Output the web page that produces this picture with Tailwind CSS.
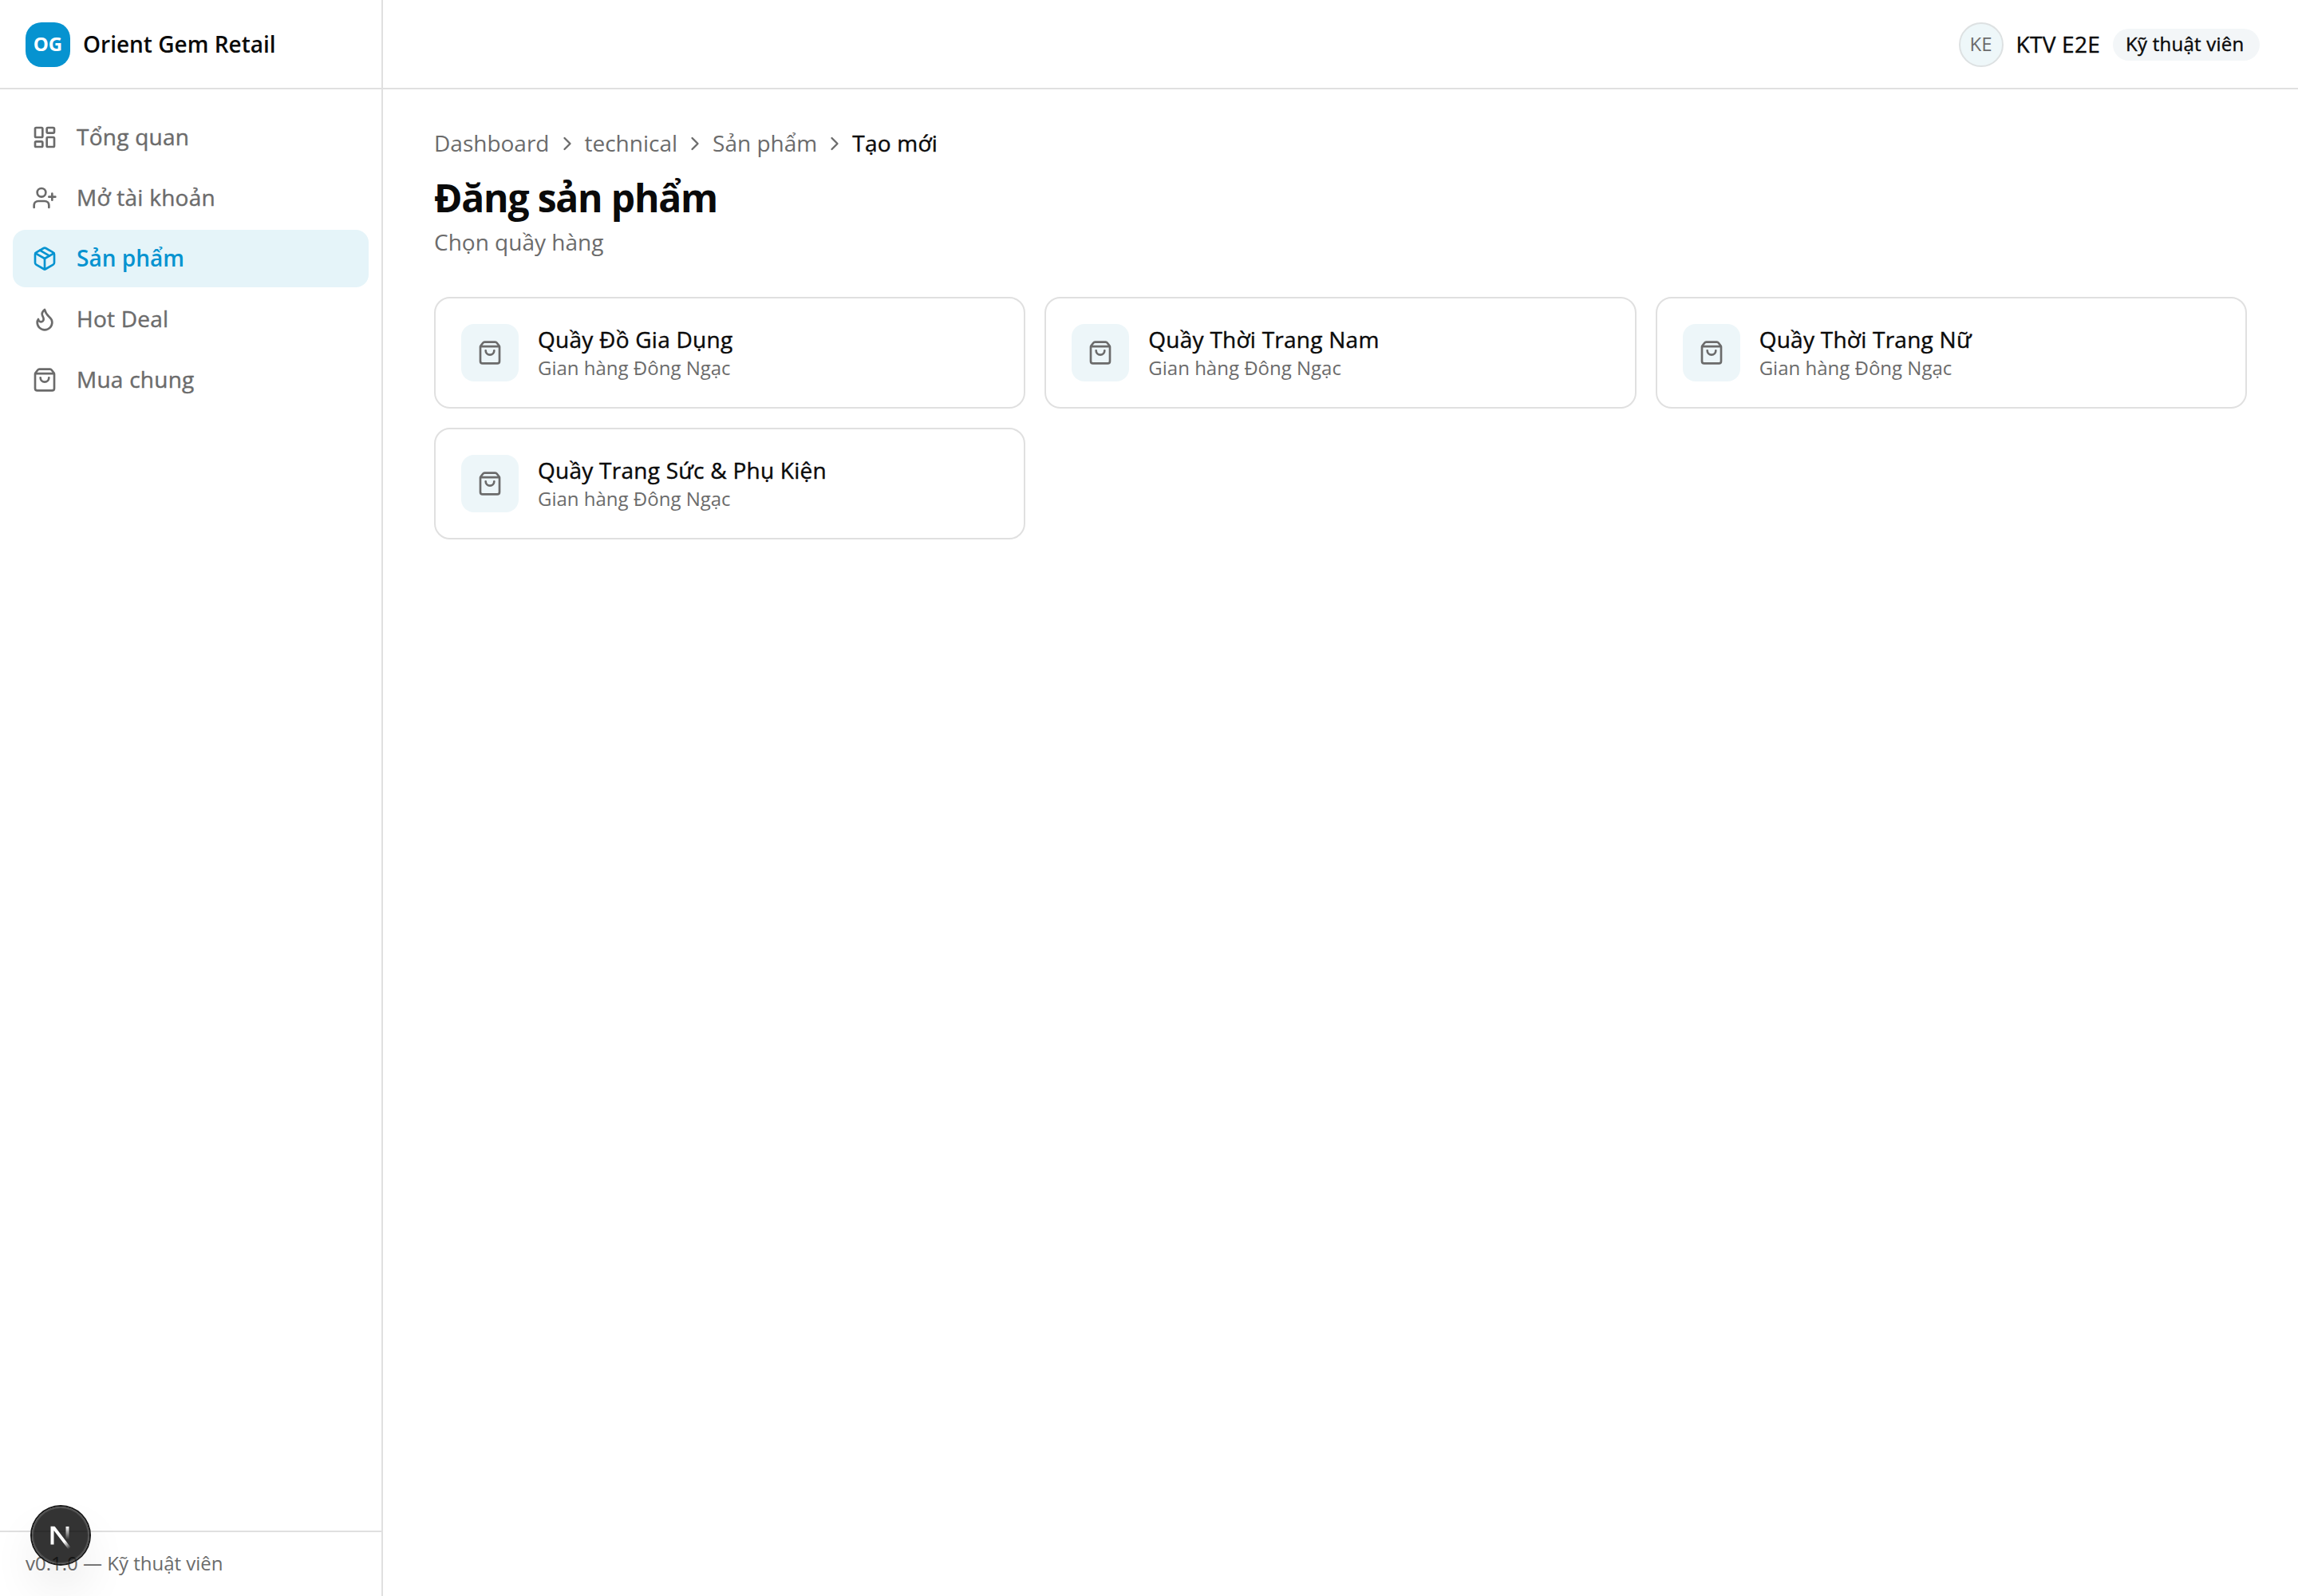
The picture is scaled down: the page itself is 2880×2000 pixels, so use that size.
<!DOCTYPE html>
<html lang="vi">
<head>
    <meta charset="UTF-8">
    <meta name="viewport" content="width=device-width, initial-scale=1.0">
    <title>Đăng sản phẩm | Orient Gem Retail</title>
    <script src="https://cdn.jsdelivr.net/npm/@tailwindcss/browser@4"></script>
    <style>
        body { font-family: 'Open Sans', 'Noto Sans', sans-serif; }
        /* Open Sans has no medium cut here, thicken the regular one */
        .medium { -webkit-text-stroke: 0.4px currentColor; letter-spacing: 0.25px; }
    </style>
</head>
<body class="bg-white text-[#0a0a0a] text-[28px] leading-[40px]">

    <!-- Icons -->
    <svg class="hidden">
        <symbol id="i-dashboard" viewBox="0 0 24 24"><rect width="7" height="9" x="3" y="3" rx="1"/><rect width="7" height="5" x="14" y="3" rx="1"/><rect width="7" height="9" x="14" y="12" rx="1"/><rect width="7" height="5" x="3" y="16" rx="1"/></symbol>
        <symbol id="i-user-plus" viewBox="0 0 24 24"><path d="M16 21v-2a4 4 0 0 0-4-4H6a4 4 0 0 0-4 4v2"/><circle cx="9" cy="7" r="4"/><path d="M19 8v6M22 11h-6"/></symbol>
        <symbol id="i-package" viewBox="0 0 24 24"><path d="M11 21.73a2 2 0 0 0 2 0l7-4A2 2 0 0 0 21 16V8a2 2 0 0 0-1-1.73l-7-4a2 2 0 0 0-2 0l-7 4A2 2 0 0 0 3 8v8a2 2 0 0 0 1 1.73z"/><path d="M12 22V12"/><path d="M3.29 7 12 12l8.71-5"/><path d="m7.5 4.27 9 5.15"/></symbol>
        <symbol id="i-flame" viewBox="0 0 24 24"><path d="M12 3q1 4 4 6.5t3 5.5a1 1 0 0 1-14 0 5 5 0 0 1 1-3 1 1 0 0 0 5 0c0-2-1.5-3-1.5-5q0-2 2.5-4"/></symbol>
        <symbol id="i-bag" viewBox="0 0 24 24"><path d="M16 10a4 4 0 0 1-8 0"/><path d="M3.103 6.034h17.794"/><path d="M3.4 5.467a2 2 0 0 0-.4 1.2V20a2 2 0 0 0 2 2h14a2 2 0 0 0 2-2V6.667a2 2 0 0 0-.4-1.2l-2-2.667A2 2 0 0 0 17 2H7a2 2 0 0 0-1.6.8z"/></symbol>
        <symbol id="i-chevron" viewBox="0 0 24 24"><path d="m9 18 6-6-6-6"/></symbol>
    </svg>

    <div class="flex h-screen">

        <!-- Sidebar -->
        <aside class="flex w-[480px] shrink-0 flex-col border-r-2 border-[#e0e0e0]">
            <div class="flex h-28 items-center gap-4 border-b-2 border-[#e0e0e0] px-8 pt-0.5">
                <div class="flex size-14 items-center justify-center rounded-[20px] bg-[#0693d0] pb-0.5 text-2xl font-bold text-white">OG</div>
                <span class="pb-0.5 font-semibold">Orient Gem Retail</span>
            </div>
            <nav id="nav" class="flex flex-1 flex-col gap-1 px-4 py-6"></nav>
            <div class="border-t-2 border-[#e0e0e0] px-8 pt-[23px] pb-[25px] text-2xl leading-8 text-[#6b6b6b]">v0.1.0 — Kỹ thuật viên</div>
        </aside>

        <div class="flex flex-1 flex-col">
            <!-- Top bar -->
            <header class="flex h-28 items-center justify-end gap-4 border-b-2 border-[#e0e0e0] px-12 pt-0.5">
                <div class="flex size-14 items-center justify-center rounded-full border-2 border-[#dde1e2] bg-[#eef7f9] pb-0.5 text-2xl text-[#6b6b6b]">KE</div>
                <span class="medium pb-0.5">KTV E2E</span>
                <span class="medium flex h-10 w-[184px] items-center rounded-full bg-[#f3f6f8] px-4 pb-0.5 text-2xl whitespace-nowrap">Kỹ thuật viên</span>
            </header>

            <!-- Content -->
            <main class="flex flex-1 flex-col px-16 pt-12">
                <div id="crumbs" class="flex h-10 items-center gap-2 text-[#6b6b6b]"></div>
                <h1 class="mt-4 text-5xl leading-[64px] font-bold tracking-tight">Đăng sản phẩm</h1>
                <p class="mt-[3px] text-[#6b6b6b]">Chọn quầy hàng</p>
                <div id="stalls" class="mt-[49px] grid grid-cols-3 gap-6"></div>
            </main>
        </div>
    </div>

    <!-- Dev tools button -->
    <button class="fixed bottom-10 left-10 size-[72px] rounded-full bg-black/80 shadow-[0_0_0_2px_#171717,inset_0_0_0_2px_rgba(255,255,255,0.14),0_32px_64px_-16px_rgba(0,0,0,0.24)]">
        <svg class="size-[72px]" viewBox="0 0 36 36" fill="none">
            <defs>
                <linearGradient id="g1" x1="9.96" y1="11.12" x2="15.48" y2="17.97" gradientUnits="userSpaceOnUse"><stop stop-color="white"/><stop offset="0.604" stop-color="white" stop-opacity="0"/></linearGradient>
                <linearGradient id="g2" x1="11.82" y1="1.4" x2="11.79" y2="9.63" gradientUnits="userSpaceOnUse"><stop stop-color="white"/><stop offset="1" stop-color="white" stop-opacity="0"/></linearGradient>
                <clipPath id="c"><rect x="0" y="1.35" width="16" height="15"/></clipPath>
            </defs>
            <g transform="translate(10.3 11)" stroke-width="2" clip-path="url(#c)">
                <path d="M13.3 15.2 2.45 1v11.8" stroke="url(#g1)"/>
                <path d="M11.95 1.35v11.6" stroke="url(#g2)"/>
            </g>
        </svg>
    </button>

    <script>
        const menu = [
            { icon: 'dashboard', label: 'Tổng quan' },
            { icon: 'user-plus', label: 'Mở tài khoản' },
            { icon: 'package', label: 'Sản phẩm', active: true },
            { icon: 'flame', label: 'Hot Deal' },
            { icon: 'bag', label: 'Mua chung' }
        ];
        const crumbs = ['Dashboard', 'technical', 'Sản phẩm', 'Tạo mới'];
        const stalls = ['Quầy Đồ Gia Dụng', 'Quầy Thời Trang Nam', 'Quầy Thời Trang Nữ', 'Quầy Trang Sức &amp; Phụ Kiện'];

        function icon(name, cls) {
            return `<svg class="${cls} shrink-0" fill="none" stroke="currentColor" stroke-width="2" stroke-linecap="round" stroke-linejoin="round"><use href="#i-${name}"/></svg>`;
        }

        document.getElementById('nav').innerHTML = menu.map(m => `
            <a class="flex h-[72px] items-center gap-6 rounded-2xl px-6 ${m.active ? 'bg-[#e5f4f9] font-semibold text-[#0693d0]' : 'medium text-[#6b6b6b]'}">
                ${icon(m.icon, 'size-8')}<span class="pb-0.5">${m.label}</span>
            </a>`).join('');

        document.getElementById('crumbs').innerHTML = crumbs.map((c, i) =>
            i < crumbs.length - 1
                ? `<a class="pb-0.5">${c}</a>${icon('chevron', 'size-7')}`
                : `<span class="medium pb-0.5 text-[#0a0a0a]">${c}</span>`
        ).join('');

        document.getElementById('stalls').innerHTML = stalls.map(s => `
            <div class="flex h-[140px] items-center gap-6 rounded-[20px] border-2 border-[#e0e0e0] px-8">
                <div class="flex size-[72px] items-center justify-center rounded-2xl bg-[#edf6f9] text-[#6b6b6b]">${icon('bag', 'size-8')}</div>
                <div class="pb-0.5">
                    <p class="medium">${s}</p>
                    <p class="text-2xl leading-8 text-[#6b6b6b]">Gian hàng Đông Ngạc</p>
                </div>
            </div>`).join('');
    </script>
</body>
</html>
